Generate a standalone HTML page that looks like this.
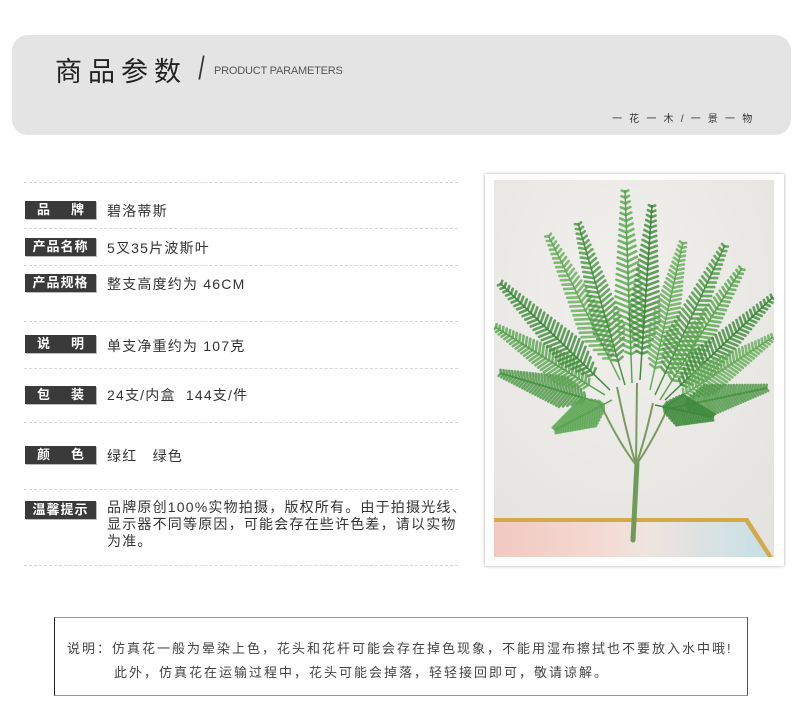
<!DOCTYPE html>
<html><head><meta charset="utf-8">
<style>
body{margin:0;width:800px;height:726px;background:#fff;position:relative;overflow:hidden;font-family:"Liberation Sans","Noto Sans CJK SC",sans-serif;color:#333}
.hdr{position:absolute;left:12px;top:35px;width:779px;height:100px;background:#e4e4e4;border-radius:16px}
.t1{position:absolute;left:55px;top:50px;font-size:27px;letter-spacing:6px;color:#222}
.sl{position:absolute;left:197px;top:50px;font-size:32px;color:#333;transform:scaleX(.7)}
.t2{position:absolute;left:214px;top:65px;font-size:11px;color:#555;letter-spacing:-.2px}
.t3{position:absolute;left:612px;top:110px;font-size:10px;color:#333;letter-spacing:2.2px}
.dl{position:absolute;left:24px;width:434px;border-top:1px dashed #d8d8d8}
.lb{position:absolute;left:25px;width:71px;height:18px;background:#3a3a3a;color:#fff;font-size:13px;font-weight:bold;line-height:18px;box-shadow:1px 1px 0 #bbb}
.lb.sp{display:flex;justify-content:space-between;padding:0 12px;box-sizing:border-box}
.lb.c{text-align:center;letter-spacing:1px}
.tx{position:absolute;left:107px;font-size:14px;color:#333;letter-spacing:1.2px}
.card{position:absolute;left:485px;top:174px;width:299px;height:392px;background:#fff;box-shadow:0 0 3px rgba(0,0,0,.35)}
.note{position:absolute;left:54px;top:617px;width:694px;height:79px;border:1px solid #999;border-left:1px solid #222;border-right:1px solid #555;font-size:13px;color:#444;box-sizing:border-box;letter-spacing:2px}
</style></head><body>
<div class="hdr"></div>
<div class="t1">商品参数</div><div class="sl">/</div>
<div class="t2">PRODUCT PARAMETERS</div>
<div class="t3">一 花 一 木 / 一 景 一 物</div>

<div class="dl" style="top:182px"></div>
<div class="dl" style="top:228px"></div>
<div class="dl" style="top:265px"></div>
<div class="dl" style="top:321px"></div>
<div class="dl" style="top:368px"></div>
<div class="dl" style="top:422px"></div>
<div class="dl" style="top:489px"></div>
<div class="dl" style="top:565px"></div>

<div class="lb sp" style="top:201px"><span>品</span><span>牌</span></div><div class="tx" style="top:201px">碧洛蒂斯</div>
<div class="lb c" style="top:238px">产品名称</div><div class="tx" style="top:238px">5叉35片波斯叶</div>
<div class="lb c" style="top:274px">产品规格</div><div class="tx" style="top:274px">整支高度约为 46CM</div>
<div class="lb sp" style="top:335px"><span>说</span><span>明</span></div><div class="tx" style="top:336px">单支净重约为 107克</div>
<div class="lb sp" style="top:386px"><span>包</span><span>装</span></div><div class="tx" style="top:385px">24支/内盒&nbsp; 144支/件</div>
<div class="lb sp" style="top:446px"><span>颜</span><span>色</span></div><div class="tx" style="top:446px">绿红&nbsp;&nbsp; 绿色</div>
<div class="lb c" style="top:501px">温馨提示</div><div class="tx" style="top:499px;width:380px;line-height:17px;letter-spacing:1.2px">品牌原创100%实物拍摄，版权所有。由于拍摄光线、<br>显示器不同等原因，可能会存在些许色差，请以实物<br>为准。</div>

<div class="card"></div>
<svg id="ph" style="position:absolute;left:494px;top:180px" width="280" height="377" viewBox="494 180 280 377">
<defs>
<linearGradient id="tb" x1="0" x2="1"><stop offset="0" stop-color="#f2c9c2"/><stop offset=".35" stop-color="#f3d8d0"/><stop offset=".55" stop-color="#f0e4de"/><stop offset="1" stop-color="#c5e0e6"/></linearGradient>
<radialGradient id="wl" cx=".45" cy=".3" r=".8"><stop offset="0" stop-color="#f1f0ec"/><stop offset="1" stop-color="#e4e3df"/></radialGradient>
</defs>
<rect x="494" y="180" width="280" height="377" fill="url(#wl)"/>
<polygon points="494,521 746,521 770,557 494,557" fill="url(#tb)"/>
<polygon points="494,518 748,518 773,557 768,557 745,522 494,522" fill="#d4a94a"/>
<g id="pl"></g>
</svg>

<div class="note">
<div style="position:absolute;left:12px;top:20px">说明：仿真花一般为晕染上色，花头和花杆可能会存在掉色现象，不能用湿布擦拭也不要放入水中哦!</div>
<div style="position:absolute;left:59px;top:44px">此外，仿真花在运输过程中，花头可能会掉落，轻轻接回即可，敬请谅解。</div>
</div>

<script>
var g=document.getElementById('pl'),s='';
s+='<path d="M637,463 L633,540" stroke="#6f9a5a" stroke-width="5" stroke-linecap="round"/>';
var st=[[600,403],[617,387],[637,383],[653,403],[670,403]];
st.forEach(function(p){s+='<path d="M636,465 Q'+((p[0]+636)/2)+','+((p[1]+470)/2+5)+' '+p[0]+','+p[1]+'" stroke="#7a9a60" stroke-width="2" fill="none"/>';});
var fr=[[600,403,500,373],[605,395,495,327],[610,390,500,283],[620,380,548,235],[625,385,578,223],[632,383,625,190],[640,380,652,205],[650,390,683,242],[655,395,725,245],[660,400,742,268],[665,400,773,297],[668,405,773,337],[672,408,767,388],[612,400,555,430],[655,405,713,417]];
var cols=['#4a9543','#5aa550','#3f8a3c','#66ad5a'];
fr.forEach(function(f,i){
 var x0=f[0],y0=f[1],x1=f[2],y1=f[3],dx=x1-x0,dy=y1-y0,L=Math.sqrt(dx*dx+dy*dy),ux=dx/L,uy=dy/L,nx=-uy,ny=ux;
 var c=cols[i%4];
 s+='<line x1="'+x0+'" y1="'+y0+'" x2="'+x1+'" y2="'+y1+'" stroke="'+c+'" stroke-width="1.5"/>';
 for(var t=0.15;t<1;t+=0.03){
  var px=x0+dx*t,py=y0+dy*t,w=(1-t)*18+3;
  if(t<0.3)w*=(t-0.15)/0.15*0.7+0.3;
  [1,-1].forEach(function(sg){
   var ex=px+nx*w*sg+ux*w*0.45,ey=py+ny*w*sg+uy*w*0.45;
   s+='<line x1="'+px.toFixed(1)+'" y1="'+py.toFixed(1)+'" x2="'+ex.toFixed(1)+'" y2="'+ey.toFixed(1)+'" stroke="'+c+'" stroke-width="2.6" stroke-linecap="round" opacity=".8"/>';
  });
 }
});
g.innerHTML=s;
</script>
</body></html>
